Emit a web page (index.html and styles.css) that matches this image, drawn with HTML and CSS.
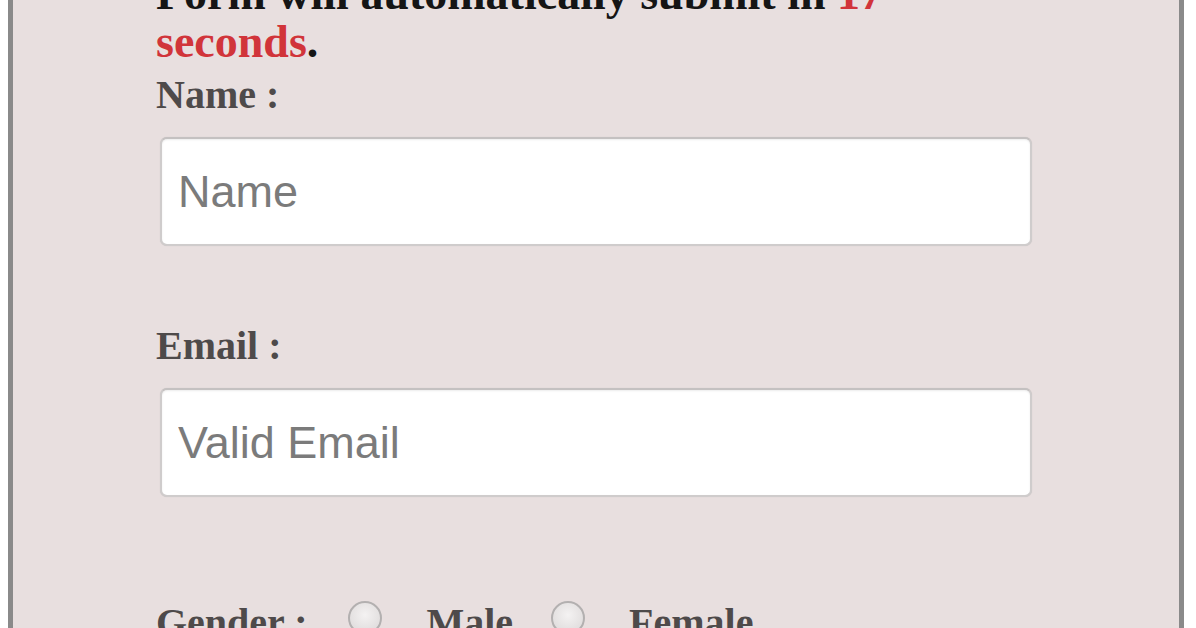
FILE: index.html
```html
<!DOCTYPE html>
<html lang="en">
<head>
<meta charset="utf-8">
<title>Form</title>
<link rel="stylesheet" href="styles.css">
</head>
<body>
<div class="panel">
  <form class="form">
    <p class="notice">Form will automatically submit in <span class="red">17</span> <span class="red">seconds</span>.</p>
    <label class="label" for="name">Name :</label>
    <input class="field" id="name" type="text" placeholder="Name">
    <label class="label label-email" for="email">Email :</label>
    <input class="field" id="email" type="email" placeholder="Valid Email">
    <div class="gender">
      <span class="gender-label">Gender :</span>
      <input class="radio" type="radio" name="gender" id="male">
      <label class="opt" for="male">Male</label>
      <input class="radio" type="radio" name="gender" id="female">
      <label class="opt" for="female">Female</label>
    </div>
  </form>
</div>
</body>
</html>
```
FILE: styles.css
```css
html {
  background: #ffffff;
  overflow: hidden;
}
body {
  margin: 0 8px;
  padding: 0;
}
.panel {
  margin-top: -55.5px;
  width: 1176px;
  box-sizing: border-box;
  border: 5px solid #8a8a8a;
  background: #e8dfdf;
  padding: 20px 147px 200px 143px;
}
.form {
  display: flex;
  flex-direction: column;
  align-items: flex-start;
}
.notice {
  margin: 0;
  font-family: "Liberation Serif", "Times New Roman", serif;
  font-weight: bold;
  font-size: 46px;
  line-height: 48px;
  color: #151515;
  width: 876px;
}
.red {
  color: #d1343a;
}
.label {
  display: block;
  margin-top: 7.5px;
  font-family: "Liberation Serif", "Times New Roman", serif;
  font-weight: bold;
  font-size: 40px;
  line-height: 44px;
  color: #4e4a4a;
}
.label-email {
  margin-top: 78px;
}
.field {
  margin: 20px 0 0 4px;
  width: 872px;
  height: 109px;
  box-sizing: border-box;
  border: 2px solid #cfcccc;
  border-top-color: #c4c1c1;
  border-radius: 7px;
  background: #ffffff;
  box-shadow: inset 0 1px 2px rgba(0, 0, 0, 0.08), 0 0 1px rgba(0, 0, 0, 0.15);
  padding: 0 16px;
  font-family: "Liberation Sans", Arial, sans-serif;
  font-size: 45px;
  color: #333;
  outline: none;
}
.field::placeholder {
  color: #7b7b7b;
}
.gender {
  display: flex;
  align-items: flex-start;
  margin-top: 103.5px;
  font-family: "Liberation Serif", "Times New Roman", serif;
  font-weight: bold;
  font-size: 40px;
  line-height: 44px;
  color: #4e4a4a;
}
.gender-label {
  margin-right: 41px;
}
.radio {
  appearance: none;
  -webkit-appearance: none;
  margin: 0;
  width: 34px;
  height: 34px;
  box-sizing: border-box;
  border-radius: 50%;
  border: 2px solid #b3b0b0;
  background: radial-gradient(circle at 50% 40%, #f4f2f2 0%, #e2dfdf 70%, #d6d3d3 100%);
}
.opt {
  margin-left: 44px;
  margin-right: 38px;
}
```
